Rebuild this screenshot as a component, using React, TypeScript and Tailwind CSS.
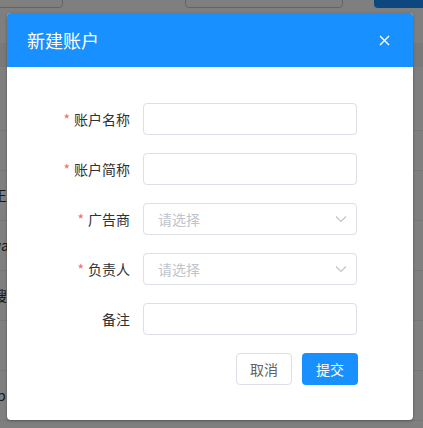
import React from "react";

const font = { fontFamily: '"Noto Sans CJK SC", "Noto Sans", sans-serif' };

function Row({ label, required, select }: { label: string; required?: boolean; select?: boolean }) {
  return (
    <div className="flex items-center h-8">
      <div className="w-[136px] pr-[13px] flex justify-end items-center text-[14px] text-[#303133]">
        {required && <span className="text-[#f56c6c] mr-[4px]">*</span>}
        <span>{label}</span>
      </div>
      <div className="flex-1 h-8 border border-[#dcdfe6] rounded-[4px] bg-white flex items-center pl-[14px] pr-[9px]">
        {select && (
          <>
            <span className="flex-1 text-[14px] text-[#c0c4cc]">请选择</span>
            <svg width="12" height="8" viewBox="0 0 12 8">
              <polyline points="1,1.5 6,6.5 11,1.5" fill="none" stroke="#c0c4cc" strokeWidth="1.2" />
            </svg>
          </>
        )}
      </div>
    </div>
  );
}

export default function App() {
  return (
    <div className="relative w-[423px] h-[428px] overflow-hidden bg-white" style={font}>
      {/* background page */}
      <div className="flex flex-col">
        <div className="flex mt-[-24px] h-8">
          <div className="shrink-0 ml-[-100px] w-[163px] h-8 border border-[#c8c8c8] rounded-[4px]" />
          <div className="shrink-0 ml-[122px] w-[158px] h-8 border border-[#c8c8c8] rounded-[4px]" />
          <div className="shrink-0 ml-[31px] w-[70px] h-8 bg-[#1890ff] rounded-[4px]" />
        </div>
        <div className="mt-[35px] h-[24px] bg-[#f2f2f2]" />
        <div className="h-[64px] border-b border-[#ebeef5]" />
        <div className="h-[40px] border-b border-[#ebeef5]" />
        <div className="h-[50px] border-b border-[#ebeef5] flex items-center text-[14px] text-[#333] ml-[-7px]">王</div>
        <div className="h-[50px] border-b border-[#ebeef5] flex items-center text-[14px] text-[#333] ml-[-10px]">wa</div>
        <div className="h-[50px] border-b border-[#ebeef5] flex items-center text-[14px] text-[#333] ml-[-7px]">搜</div>
        <div className="h-[50px] border-b border-[#ebeef5]" />
        <div className="h-[50px] border-b border-[#ebeef5] flex items-center text-[14px] text-[#333] ml-[-3px]">p</div>
      </div>

      {/* overlay */}
      <div className="absolute inset-0 bg-black/50" />

      {/* dialog */}
      <div className="absolute left-[7px] top-[13px] w-[406px] bg-white rounded-[4px] shadow-[0_1px_3px_rgba(0,0,0,0.3)] overflow-hidden">
        <div className="h-[54px] bg-[#1890ff] flex items-center justify-between pl-[20px] pr-[23px]">
          <span className="text-[18px] text-white leading-6">新建账户</span>
          <svg width="11" height="11" viewBox="0 0 11 11">
            <path d="M1 1 L10 10 M10 1 L1 10" stroke="white" strokeWidth="1.4" />
          </svg>
        </div>
        <div className="pt-[36px] pb-[35px] pr-[56px] flex flex-col gap-[18px]">
          <Row label="账户名称" required />
          <Row label="账户简称" required />
          <Row label="广告商" required select />
          <Row label="负责人" required select />
          <Row label="备注" />
          <div className="flex justify-end gap-[10px] mr-[-1px]">
            <button className="w-[56px] h-8 border border-[#dcdfe6] rounded-[4px] bg-white text-[14px] text-[#606266]">取消</button>
            <button className="w-[56px] h-8 rounded-[4px] bg-[#1890ff] text-[14px] text-white">提交</button>
          </div>
        </div>
      </div>
    </div>
  );
}
